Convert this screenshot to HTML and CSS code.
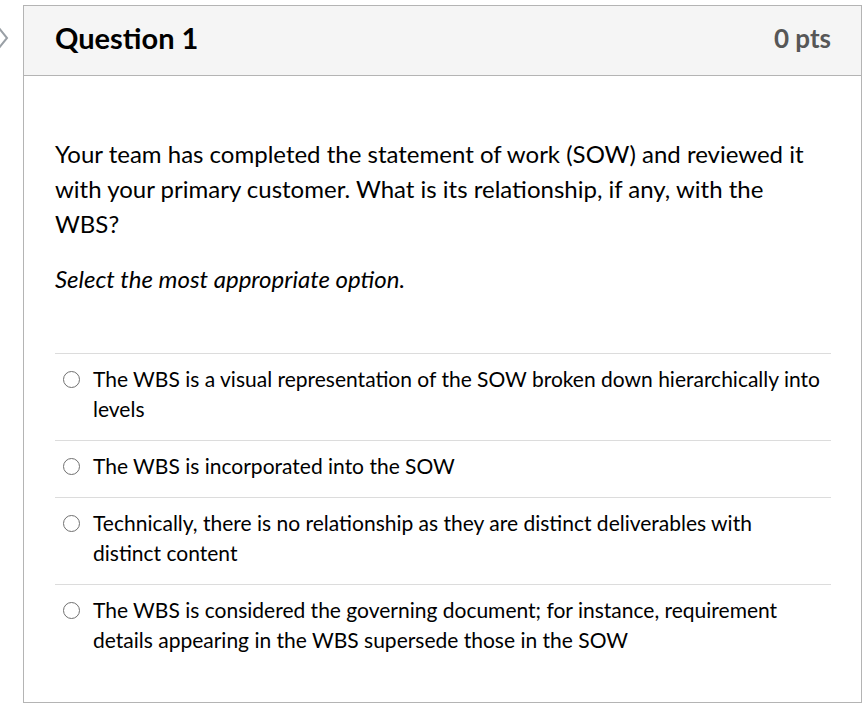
FILE: index.html
```html
<!DOCTYPE html>
<html>
<head>
<meta charset="utf-8">
<link rel="stylesheet" href="styles.css">
</head>
<body>
<div class="page">
  <div class="chevron"><svg width="12" height="26" viewBox="0 0 12 26"><path d="M1 2 L10 13 L1 24" fill="none" stroke="#9aa0a6" stroke-width="2"/></svg></div>
  <div class="card">
    <div class="header">
      <h2 class="title">Question 1</h2>
      <div class="pts">0 pts</div>
    </div>
    <div class="content">
      <p class="q">Your team has completed the statement of work (SOW) and reviewed it with your primary customer. What is its relationship, if any, with the WBS?</p>
      <p class="q italic">Select the most appropriate option.</p>
      <div class="answers">
        <label class="answer"><span class="radio"></span><span class="atext">The WBS is a visual representation of the SOW broken down hierarchically into levels</span></label>
        <label class="answer"><span class="radio"></span><span class="atext">The WBS is incorporated into the SOW</span></label>
        <label class="answer"><span class="radio"></span><span class="atext">Technically, there is no relationship as they are distinct deliverables with distinct content</span></label>
        <label class="answer"><span class="radio"></span><span class="atext">The WBS is considered the governing document; for instance, requirement details appearing in the WBS supersede those in the SOW</span></label>
      </div>
    </div>
  </div>
</div>
</body>
</html>
```
FILE: styles.css
```css
html, body {
  margin: 0;
  padding: 0;
  background: #fff;
}
body {
  font-family: Lato, "Open Sans", sans-serif;
  color: #2d3b45;
}
.page {
  position: relative;
  padding: 5px 3px 0 23px;
  width: 839px;
}
.chevron {
  position: absolute;
  left: -3px;
  top: 25px;
}
.card {
  border: 1px solid #b4b4b4;
  height: 698px;
  box-sizing: border-box;
}
.header {
  display: flex;
  justify-content: space-between;
  align-items: center;
  background: #f5f5f5;
  border-bottom: 1px solid #b4b4b4;
  height: 69px;
  padding: 0 30px 0 31px;
}
.title {
  margin: 0;
  font-size: 29px;
  font-weight: 700;
  color: #000;
  padding-bottom: 6px;
}
.pts {
  font-size: 26px;
  font-weight: 700;
  color: #575757;
  padding-bottom: 6px;
}
.content {
  padding: 60px 30px 0 31px;
}
.q {
  margin: 0 0 20px 0;
  font-size: 24px;
  line-height: 35px;
  color: #000;
}
.italic {
  font-style: italic;
}
.answers {
  margin-top: 57px;
}
.answer {
  display: flex;
  align-items: flex-start;
  border-top: 1px solid #dcdcdc;
  padding: 10px 8px 16px 8px;
  font-size: 21px;
  line-height: 30px;
  color: #000;
}
.radio {
  flex: none;
  box-sizing: border-box;
  width: 17px;
  height: 17px;
  border: 1.5px solid #707070;
  border-radius: 50%;
  margin: 7px 13px 0 0;
}
.atext {
  flex: 1;
}
```
